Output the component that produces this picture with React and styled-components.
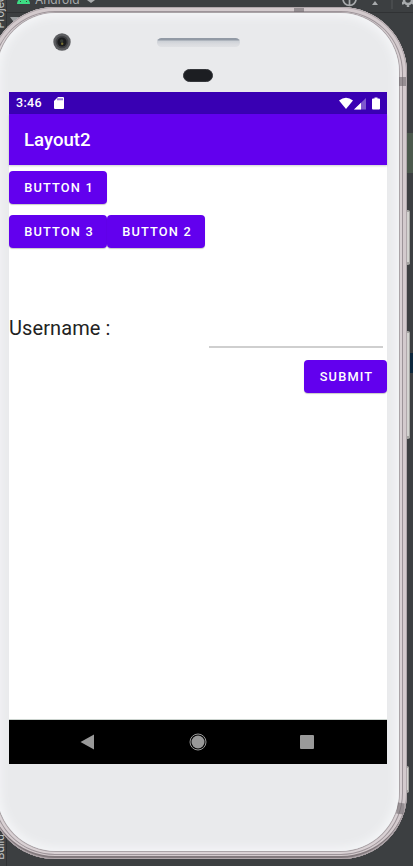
import React from 'react';
import styled, { createGlobalStyle } from 'styled-components';

const Global = createGlobalStyle`
  * { box-sizing: border-box; }
  body { margin: 0; background: #3c3f41; overflow: hidden; }
`;

const Desktop = styled.main`
  position: relative;
  width: 413px;
  height: 866px;
  overflow: hidden;
  background: #3c3f41;
  font-family: Roboto, "Liberation Sans", sans-serif;
`;

const Toolbar = styled.header`
  height: 13px;
  display: flex;
  align-items: flex-start;
  padding-left: 17px;
  border-bottom: 1px solid #303234;
  color: #a8abad;
  font: 12px/14px Inter, sans-serif;
  overflow: hidden;
`;

const ToolName = styled.span`
  width: 44px;
  margin: -7px 0 0 5px;
`;

const ToolIcon = styled.svg`
  display: block;
  flex: none;
  margin-left: ${p => p.$gap || 0}px;
`;

const SideStripe = styled.div`
  position: absolute;
  left: 0;
  top: 0;
  width: 7px;
  height: 866px;
  border-right: 1px solid #303234;
`;

const SideLabel = styled.div`
  position: absolute;
  left: -7px;
  top: ${p => p.$top}px;
  writing-mode: vertical-rl;
  transform: rotate(180deg);
  color: #c5c8c9;
  font: 11px/14px Inter, sans-serif;
`;

const TreeArrow = styled.svg`
  position: absolute;
  left: 10px;
  top: 17px;
`;

const EditorMark = styled.div`
  position: absolute;
  right: 0;
  top: ${p => p.$top}px;
  width: 7px;
  height: ${p => p.$height}px;
  background: ${p => p.$color};
`;

const SideKey = styled.div`
  position: absolute;
  left: 404px;
  top: ${p => p.$top}px;
  width: ${p => p.$width || 6}px;
  height: ${p => p.$height}px;
  border-radius: 2px;
  border: 1px solid #a4a4a1;
  border-width: 2px 1px 3px 0;
  background: #d3d3d0;
`;

const Phone = styled.section`
  position: absolute;
  left: -11px;
  top: 7px;
  width: 418px;
  height: 852px;
  padding: 6px 8px 8px;
  border-radius: 66px;
  background: #d3cacd;
  box-shadow: inset 0 0 0 1px #b0a7ab, inset 0 -3px 0 0 #82797d,
    inset 0 0 0 4px #d3cacd, inset 0 0 0 5px #9d9499, inset 0 0 0 7px #d9d1d4;
`;

const Face = styled.div`
  height: 838px;
  padding: 0 12px;
  display: flex;
  flex-direction: column;
  border-radius: 59px;
  background: #e9eaec;
  box-shadow: 0 0 0 1px #aaa3a7, inset 0 0 9px 4px #f4f5f7;
`;

const Hardware = styled.div`
  height: 79px;
  flex: none;
  display: grid;
  grid-template-columns: 148px 83px 1fr;
  grid-template-rows: 50px 29px;
`;

const Camera = styled.svg`
  display: block;
  margin: 20px 0 0 44px;
`;

const Speaker = styled.div`
  height: 9px;
  margin-top: 25px;
  border-radius: 5px;
  background: linear-gradient(#929aa5 0 2px, #ccd0d6 3px, #d9dbdf 6px, #e0e1e4);
`;

const Sensor = styled.div`
  grid-column: 2;
  width: 30px;
  height: 13px;
  margin: 6px 0 0 26px;
  border-radius: 7px;
  background: #1c1e22;
  border: 1px solid #34363a;
`;

const Screen = styled.div`
  width: 378px;
  height: 672px;
  flex: none;
  display: flex;
  flex-direction: column;
  background: #fff;
`;

const StatusBar = styled.div`
  height: 22px;
  flex: none;
  display: flex;
  align-items: center;
  padding: 0 6px 0 7px;
  background: #3900b3;
  color: #fff;
`;

const Time = styled.span`
  width: 38px;
  font: 500 12.5px/22px Roboto, sans-serif;
  letter-spacing: .3px;
`;

const StatusIcons = styled.svg`
  display: block;
  margin-left: auto;
`;

const AppBar = styled.div`
  height: 51px;
  flex: none;
  padding: 1px 15px 0;
  background: #6200ee;
  box-shadow: 0 1px 2px rgba(0, 0, 0, .2);
  color: #fff;
  font-size: 18.6px;
  font-weight: 500;
  line-height: 51px;
`;

const Content = styled.div`
  flex: 1;
  display: flex;
  flex-direction: column;
  padding-top: 6px;
`;

const ButtonRow = styled.div`
  display: flex;
  justify-content: ${p => (p.$end ? 'flex-end' : 'flex-start')};
  margin-bottom: ${p => p.$after || 0}px;
`;

const Button = styled.button`
  width: ${p => p.$width || 98}px;
  height: 33px;
  padding: 1px 0 0 2px;
  border: 0;
  border-radius: 4px;
  background: #6200ee;
  box-shadow: 0 1px 1px rgba(0, 0, 0, .22);
  color: #fff;
  font: 500 12.8px/32px Roboto, sans-serif;
  letter-spacing: 1.17px;
  white-space: nowrap;
`;

const Field = styled.label`
  height: 44px;
  display: flex;
  justify-content: space-between;
  margin-bottom: 12px;
  padding-right: 4px;
  color: #222;
  font-size: 20px;
  line-height: 48px;
  letter-spacing: .1px;
`;

const Input = styled.input`
  width: 174px;
  height: 44px;
  padding: 0;
  border: 0;
  border-bottom: 2px solid #cfcfcf;
  border-radius: 0;
  background: transparent;
  outline: none;
`;

const NavBar = styled.nav`
  height: 45px;
  flex: none;
  display: grid;
  grid-template-columns: 157px 64px 157px;
  place-items: center;
  border-top: 1px solid #cbd3ce;
  background: #000;
`;

const NavIcon = styled.svg`
  display: block;
  justify-self: ${p => p.$side || 'center'};
  margin: 0 ${p => (p.$side ? p.$inset : 0)}px;
`;

const Antenna = styled.div`
  position: absolute;
  left: ${p => p.$left}px;
  top: ${p => p.$top}px;
  width: ${p => p.$width}px;
  height: ${p => p.$height}px;
  background: rgba(110, 103, 108, .6);
  transform: rotate(${p => p.$turn || 0}deg);
`;

export default function App() {
  return (
    <Desktop>
      <Global />
      <Toolbar>
        <ToolIcon width="13" height="4" fill="#3ddc84">
          <path d="M0 4C0 2 1 0 2 0h9c1 0 2 2 2 4Z" />
          <path d="M3 1h1v1H3zM9 1h1v1H9z" fill="#3c3f41" />
        </ToolIcon>
        <ToolName>Android</ToolName>
        <ToolIcon width="8" height="4" $gap={8} fill="#a8abad"><path d="M0 0h8L4 3Z" /></ToolIcon>
        <ToolIcon width="15" height="8" $gap={247} fill="none" stroke="#a8abad" strokeWidth="1.7">
          <path d="M1 -1a6.4 6.4 0 0 0 13 0M7.5 -1v6" />
        </ToolIcon>
        <ToolIcon width="8" height="6" $gap={14} fill="#a8abad"><path d="M1 5h6L4 1Z" /></ToolIcon>
        <ToolIcon width="2" height="10" $gap={12} stroke="#55585a"><path d="M1 0v9" /></ToolIcon>
        <ToolIcon width="12" height="7" $gap={9} fill="none" stroke="#a8abad" strokeWidth="2.5">
          <path d="M2 0a4 4 0 0 0 8 0M2 2 0 4M6 4v3M10 2l2 2" />
        </ToolIcon>
      </Toolbar>
      <SideStripe />
      <SideLabel $top={-8}>Project</SideLabel>
      <SideLabel $top={834}>Build</SideLabel>
      <TreeArrow width="9" height="6" fill="#9da0a2"><path d="M0 0h9L4.5 6Z" /></TreeArrow>
      <EditorMark $top={133} $height={40} $color="#4b594c" />
      <EditorMark $top={353} $height={20} $color="#0d293e" />
      <SideKey $top={210} $height={55} />
      <SideKey $top={331} $height={108} />
      <SideKey $top={766} $height={27} $width={5} />
      <Phone>
        <Face>
          <Hardware>
            <Camera width="18" height="18" viewBox="0 0 18 18">
              <circle cx="9" cy="9" r="8.7" fill="#5c5d60" />
              <circle cx="9" cy="9" r="6.3" fill="#3f4043" />
              <circle cx="9" cy="9" r="4.6" fill="#1b1c1e" />
              <circle cx="8.7" cy="8" r="1.7" fill="#343a35" />
              <circle cx="9.2" cy="10.7" r="1.2" fill="#777034" />
            </Camera>
            <Speaker />
            <Sensor />
          </Hardware>
          <Screen>
            <StatusBar>
              <Time>3:46</Time>
              <svg width="10" height="12" viewBox="0 0 10 12">
                <path d="M4 0h5q1 0 1 1v10q0 1-1 1H1q-1 0-1-1V4Z" fill="#fff" />
                <path d="M4 1.3v2M6 1.3v2M8 1.3v2" stroke="#3900b3" />
              </svg>
              <StatusIcons width="42" height="13" viewBox="0 0 42 13" fill="#fff">
                <path d="M0 3.4Q7-1.8 14 3.4L7 12Z" />
                <path d="M27 1v11.5H15Z" opacity=".35" />
                <path d="M22 5.8v6.7h-7Z" />
                <path d="M34 1.5h1.5v-1h3v1H40q1 0 1 1v9q0 1-1 1h-6q-1 0-1-1v-9q0-1 1-1Z" />
              </StatusIcons>
            </StatusBar>
            <AppBar>Layout2</AppBar>
            <Content>
              <ButtonRow $after={11}><Button>BUTTON 1</Button></ButtonRow>
              <ButtonRow $after={56}>
                <Button>BUTTON 3</Button>
                <Button>BUTTON 2</Button>
              </ButtonRow>
              <Field>Username :<Input /></Field>
              <ButtonRow $end><Button $width={83}>SUBMIT</Button></ButtonRow>
            </Content>
            <NavBar>
              <NavIcon $side="start" $inset={70} width="16" height="16" fill="#999"><path d="M15 .5v15L1.5 8Z" /></NavIcon>
              <NavIcon width="18" height="18">
                <circle cx="9" cy="9" r="8" fill="none" stroke="#999" />
                <circle cx="9" cy="9" r="6.5" fill="#999" />
              </NavIcon>
              <NavIcon $side="end" $inset={72} width="16" height="16" fill="#999"><rect x="1" y="1" width="14" height="14" rx="1" /></NavIcon>
            </NavBar>
          </Screen>
        </Face>
        <Antenna $left={305} $top={1} $width={10} $height={4} />
        <Antenna $left={410} $top={70} $width={7} $height={9} />
        <Antenna $left={408} $top={796} $width={7} $height={11} $turn={9} />
      </Phone>
    </Desktop>
  );
}
